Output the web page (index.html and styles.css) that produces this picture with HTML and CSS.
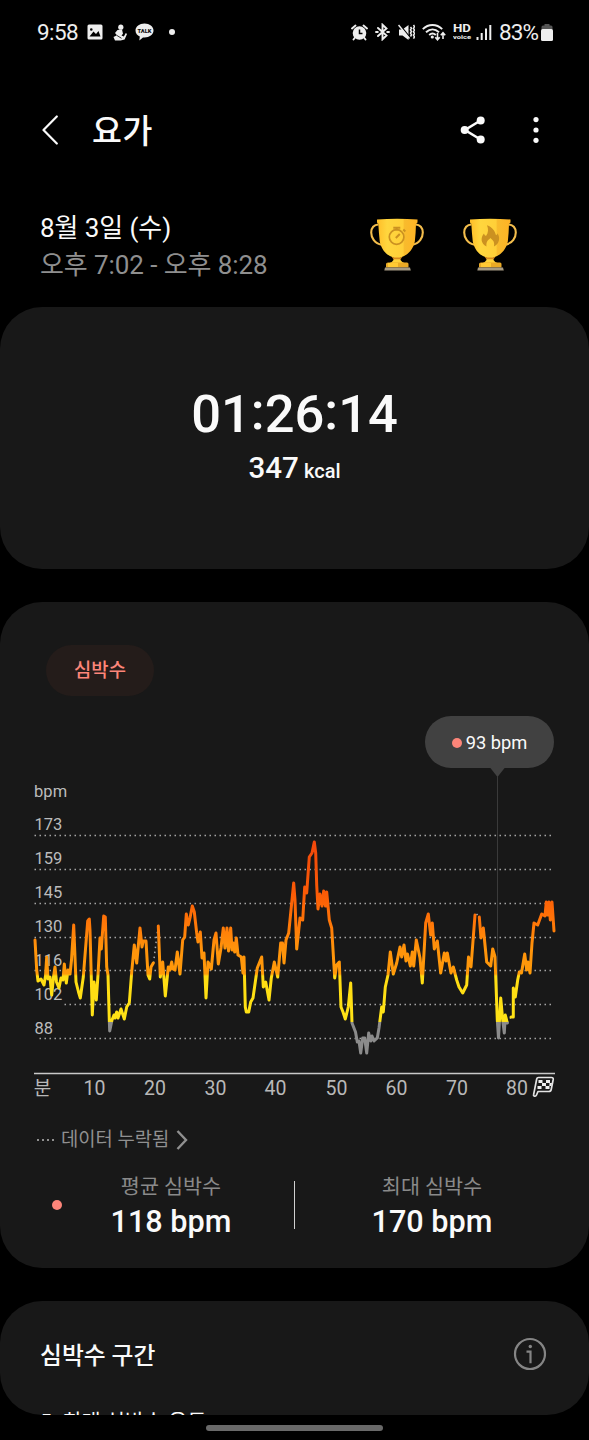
FILE: index.html
```html
<!DOCTYPE html>
<html lang="ko">
<head>
<meta charset="utf-8">
<title>요가</title>
<link rel="stylesheet" href="styles.css">
</head>
<body>
<div class="screen">
  <header class="status">
    <span class="clock">9:58</span>
    <svg class="st-photo" width="16" height="16" viewBox="0 0 16 16"><path fill="#eee" fill-rule="evenodd" d="M2 .5h12a1.500 1.500 0 0 1 1.500 1.500v12a1.500 1.500 0 0 1-1.500 1.500H2A1.500 1.500 0 0 1 .5 14V2A1.500 1.500 0 0 1 2 .5zM2.500 12.500h11L11.500 7 9 10 6.500 7.500zM3 5.500a1.300 1.300 0 1 0 2.600 0a1.300 1.300 0 1 0-2.600 0z"/></svg>
    <svg class="st-person" width="15" height="17" viewBox="0 0 15 17"><g fill="#eee"><circle cx="7.800" cy="3.200" r="2.600"/><path d="M4.500 6l4.500-.5 1 4.300-1.500 1.700 2.300 1 2-3.500 1.200 1-2.400 5.500-4 1H2L.5 13l3.500-1.800L2 9z"/></g><path d="M4 11.500l4.500 2.800" stroke="#000" stroke-width=".8"/></svg>
    <svg class="st-talk" width="19" height="18" viewBox="0 0 19 18"><path fill="#eee" d="M9.500.5c5 0 9 3 9 7s-4 7-9 7l-1.500-.1-3.700 3 .5-3.800C2.300 12.500.5 10.300.5 7.500c0-4 4-7 9-7z"/><text x="2.500" y="10" textLength="14" lengthAdjust="spacingAndGlyphs" class="tiny dark">TALK</text></svg>
    <i class="st-dot"></i>
    <span class="grow"></span>
    <svg class="st-alarm" width="17" height="17" viewBox="0 0 17 17"><circle cx="8.500" cy="9" r="5.300" fill="none" stroke="#eee" stroke-width="3"/><circle cx="8.500" cy="9" r="5" fill="#eee"/><path d="M1 4.500L4.500 1.500M16 4.500L12.500 1.500M4 13.500l-1.500 2M13 13.500l1.500 2" stroke="#eee" stroke-width="1.900" stroke-linecap="round"/><path d="M8.500 5.500v4H11.500" fill="none" stroke="#000" stroke-width="1.500"/></svg>
    <svg class="st-bt" width="15" height="18" viewBox="0 0 15 18"><path d="M3 5l8.500 7.500-4 3.800V1.700l4 3.800L3 13M1 9h1.800M12.200 9H14" fill="none" stroke="#eee" stroke-width="1.900" stroke-linecap="round"/></svg>
    <svg class="st-mute" width="17" height="17" viewBox="0 0 17 17"><path d="M1 5.500h3.500L10.500 1v15l-6-4.500H1z" fill="#eee"/><path d="M1.500 .5l11 13.500" stroke="#000" stroke-width="1.300"/><path d="M.5 1l11 13.500" stroke="#eee" stroke-width="1.500"/><path d="M12.500 3l1 1.300-1 1.500 1 1.700-1 1.600 1 1.700-1 1.700M15.500 1l1 1.700-1 1.700 1 1.700-1 1.700 1 1.700-1 1.700 1 1.700-1 1.700" fill="none" stroke="#eee" stroke-width="1.500"/></svg>
    <svg class="st-wifi" width="24" height="18" viewBox="0 0 24 18"><g fill="none" stroke="#eee" stroke-width="1.900"><path d="M.8 6.200c5.600-5.600 13.800-5.600 19.400 0M4 9.200c4-3.700 9-3.700 13 0M7.200 12c2-1.800 4.600-1.800 6.600 0"/></g><circle cx="10.300" cy="14" r="1.600" fill="#eee"/><path d="M15.500 10v6.500M13.300 14.300l2.200 2.500 2.200-2.500M21 16v-6M18.800 12.300L21 9.800l2.200 2.500" fill="none" stroke="#eee" stroke-width="1.600"/></svg>
    <svg class="st-hd" width="19" height="20" viewBox="0 0 19 20"><text x="0" y="10" class="hd" textLength="18" lengthAdjust="spacingAndGlyphs">HD</text><text x="0" y="17" class="voice" textLength="18" lengthAdjust="spacingAndGlyphs">voice</text></svg>
    <svg class="st-signal" width="16" height="17" viewBox="0 0 16 17"><path d="M1.500 16v-3M5.700 16V9M10 16V4.500M14.300 16V1" stroke="#eee" stroke-width="2"/></svg>
    <span class="percent">83%</span>
    <svg class="st-batt" width="12" height="17" viewBox="0 0 12 17"><path d="M3.500 0h5v1.500h1.500q1.500 0 1.500 1.500v2.500H.5V3q0-1.500 1.500-1.500h1.500z" fill="#555"/><rect x="0" y="5" width="12" height="12" rx="1.500" fill="#eee"/></svg>
  </header>

  <nav class="appbar">
    <svg class="back" width="18" height="30" viewBox="0 0 18 30"><path d="M15.800 1.500L2.500 15l13.300 13.500" fill="none" stroke="#fafafa" stroke-width="2.200" stroke-linecap="round" stroke-linejoin="round"/></svg>
    <h1>요가</h1>
    <svg class="share" width="26" height="28" viewBox="0 0 26 28"><path d="M20.500 4.500L5 14l15.500 9.500" fill="none" stroke="#fafafa" stroke-width="2.600"/><g fill="#fafafa"><circle cx="20.700" cy="4.500" r="4"/><circle cx="4.700" cy="14" r="4"/><circle cx="20.700" cy="23.500" r="4"/></g></svg>
    <svg class="more" width="6" height="28" viewBox="0 0 6 28"><g fill="#fafafa"><circle cx="3" cy="3.600" r="2.600"/><circle cx="3" cy="14" r="2.600"/><circle cx="3" cy="24.300" r="2.600"/></g></svg>
  </nav>

  <section class="when">
    <div class="when-text">
      <p class="date">8월 3일 (수)</p>
      <p class="range">오후 7:02 - 오후 8:28</p>
    </div>
    <svg class="trophy" width="54" height="53" viewBox="0 0 54 53">
      <defs>
        <linearGradient id="cup"><stop offset="0" stop-color="#ffbd28"/><stop offset=".25" stop-color="#ffd63e"/><stop offset=".64" stop-color="#ffcf38"/><stop offset=".68" stop-color="#f8bb2d"/><stop offset="1" stop-color="#ffb324"/></linearGradient>
        <g id="trophy">
          <path d="M8.500 6.500C4 6.500 1.200 10 1.200 14.500s3 11 10.500 12.200M45.500 6.500c4.500 0 7.300 3.500 7.300 8s-3 11-10.500 12.200" fill="none" stroke="#f3bd4c" stroke-width="2.100"/>
          <path d="M7 1.500Q27 .2 47.500 1.500V4q0 1.500-1.500 1.800-.2 9-1.200 18C42.500 33 37 37.500 30.500 39.500V42q1 2 5 3.500H18.500q4-1.500 5-3.500v-2.500C17 37.500 12 33 9.800 23.800q-1-9-1.500-18Q7 5.500 7 4z" fill="url(#cup)"/>
          <path d="M21.500 38.700q5.500 1.800 11 0l-2 2.500h-7z" fill="#d8891d"/>
          <path d="M16 46q0-1.500 2-1.500h19q1.500 0 1.500 1.500v3.500H16z" fill="#e9a925"/><path d="M18 45h10v4H18z" fill="#ffc933"/>
          <path d="M15 49.500h25l.8 3H14.300z" fill="#a59a83"/>
        </g>
      </defs>
      <use href="#trophy"/>
      <g fill="none" stroke="#cb9121"><circle cx="26.600" cy="19" r="7.300" stroke-width="1.700"/><path d="M23.300 9.800h7M26.600 10v2.500M33.300 11.500l2 2M25.800 20l4-4" stroke-width="2"/></g>
    </svg>
    <svg class="trophy" width="54" height="53" viewBox="0 0 54 53"><use href="#trophy"/><path d="M23.500 28.500c-6-3-6-9-2.500-13 .5 1.500 1 2 2 2.500 2.500-3.500 2.500-7 1-10.800 5.500 2 8 6 9 10 1-.5 1.500-1 1.500-2 3 4.500 2 10.500-3.500 13.300.8-5-1-6-3.500-8.500-3 2.500-4.500 4-4 8.500z" fill="#cb9121"/></svg>
  </section>

  <section class="card total">
    <p class="duration">01<span>:</span>26<span>:</span>14</p>
    <p class="energy">347 <small>kcal</small></p>
  </section>

  <section class="card heart">
    <span class="chip">심박수</span>
    <div class="bubble"><i></i>93 bpm</div>
    <svg class="chart" width="589" height="336" viewBox="0 768 589 336">
      <defs>
        <linearGradient id="zones" gradientUnits="userSpaceOnUse" x1="0" y1="840" x2="0" y2="1056">
          <stop offset="0" stop-color="#f2470b"/><stop offset=".25" stop-color="#fb5b06"/><stop offset=".4" stop-color="#ff7a08"/><stop offset=".5" stop-color="#ff930b"/><stop offset=".62" stop-color="#ff9a0a"/><stop offset=".63" stop-color="#ffdc12"/><stop offset=".84" stop-color="#ffe316"/><stop offset=".845" stop-color="#8b8b8b"/><stop offset="1" stop-color="#8b8b8b"/>
        </linearGradient>
      </defs>
      <path d="M490 767.500h15l-7.500 9.500z" fill="#414141"/>
      <path d="M497.500 776V1020" stroke="#3a3a3a"/>
      <g class="grid"><path d="M34.500 835.500H554M34.500 869.500H554M34.500 903.500H554M34.500 937.500H554M34.500 970.500H554M64.500 1004.500H554M39.500 1038.500H554"/></g>
      <g class="ylabels">
        <text x="34" y="797" class="unit">bpm</text>
        <text x="34.500" y="830">173</text><text x="34.500" y="864">159</text><text x="34.500" y="898">145</text><text x="34.500" y="932">130</text><text x="34.500" y="966">116</text><text x="34.500" y="1000">102</text><text x="34.500" y="1034">88</text>
      </g>
      <path class="missing" d="M153.500 963L158 927M476.500 914l3 3M507.500 1023l3.500-6"/>
      <path class="pulse" d="M35 940L36.700 970 38 981 41 979 44 985 45.500 976 46.700 957 48 979 50 977 51.700 995 53.500 977 55 967 56.500 982 59 988 61 978 63 980 64.300 964 66.300 983 68 970 70 974 71.500 960 73.700 925 76 982 78.500 992 80.300 998 83.300 977 87.700 921 89.300 919 90 930 92.300 1015 94 982 96.300 1000 98 975 100 938 101.300 949 103.700 916 105.300 917 106.700 967 108 975 109.300 1020 109.700 1031 112 1020 114 1015 115 1018 116.700 1012 118 1018 121 1009 124.300 1019 126.700 1007 129.300 1003 131.700 972 134.300 945 136.700 963 140 928 142 947 143.300 941 146 941 148 975 149.700 979 151 967 153.300 963"/>
      <path class="pulse" d="M158.300 926L160.300 977 162.700 962 165.300 996 168.300 967 170 970 171.700 962 173 969 175 970 177.300 952 180 974 182.700 940 184.700 937 186.300 914 188.300 925 190 918 192.300 906 194.300 912 196.700 933 198 942 200.300 932 202 958 204 953 206 998 208 962 211.300 969 214 940 216 933 218.300 964 221 948 223.300 928 225 948 227 928 228.500 951 230.700 928 232 950 233.300 943 234.700 952 236.300 938 238 955 241.300 957 243 973 244 957 245.300 1007 246.300 1012 248.700 1012 250.700 1002 253 998 256 977 257.300 968 261.700 957 263.300 987 265.700 982 269 1000 271.300 978 274.300 962 277.700 977 280.700 943 282.500 943 284 963 286 940 288.700 933 291 910 293.700 883 295 900 296.700 949 300 918 302.700 920 304.700 887 306.700 893 309.300 857 312 853 314.300 842 315.700 853 316.700 885 318 909 320 894 322 906 323.700 891 325.500 906 326.700 892 329.300 920 331.700 928 334.700 978 336.700 965 339.300 962 341 1007 343 1012 345.300 1019 348.300 1007 350.700 983 352 1023 355.500 1032 357.300 1042 359 1041 360.700 1053 362.700 1038 364.700 1038 366.700 1053 368.700 1033 370.700 1041 372 1036 374 1041 377.300 1038 379 1028 381.700 1007 383.300 1012 385.300 987 388 975 390.300 952 393.300 974 396.700 963 400 947 401.700 957 404 945 406 961 407.500 954 410.300 966 412.300 952 413.700 966 416.300 940 420 958 422.300 983 424 953 425.700 923 428.300 914 430.700 935 432.300 923 434.300 949 437.300 941 440.700 973 444.300 953 446 961 447.300 953 451 973 453.300 967 456.700 980 459 987 462.700 993 466.700 985 468.500 957 471 967 475 915"/>
      <path class="pulse" d="M479.300 917L481 938 483.300 928 486.700 962 490.700 966 492.700 949 495 957 497.300 1020 498.500 1038 500.700 998 502.700 1020 504.300 1033 505.300 1015 507.300 1023"/>
      <path class="pulse" d="M511 1017H513.300V988L515.300 997 517.700 980 519.300 972 521.500 973 524.700 954 526.700 970 528 962 530 973 532 943 534 923 537.700 925 541.700 914 545 916 546.300 902 547.700 915 549 902 550.300 920 552 902 554 931"/>
      <path d="M34 1073.500H555" stroke="#c9c9c9" stroke-width="1.500"/>
      <g class="xlabels">
        <text x="42.500" y="1094.500" class="ko">분</text><text x="94.500" y="1095">10</text><text x="155" y="1095">20</text><text x="215.500" y="1095">30</text><text x="275.500" y="1095">40</text><text x="336.500" y="1095">50</text><text x="396.500" y="1095">60</text><text x="457" y="1095">70</text><text x="517" y="1095">80</text>
      </g>
      <g><path d="M538.500 1077.500h13q2 0 1.700 2l-2 10q-.4 2-2.400 2H538l-1.500 3.500q-.6 1.500-2 1.200t-.8-2l3-15.200q.3-1.500 1.800-1.500z" fill="#1a1a1a" stroke="#e4e4e4" stroke-width="1.700" stroke-linejoin="round"/><path d="M538.500 1080h4v3h-4zM546 1080h4v3h-4zM542 1083h4v3h-4zM537.500 1086h4v3h-4zM545.500 1086h4v3h-4zM549.500 1083h2.500l-.7 3h-2z" fill="#eee"/></g>
    </svg>
    <p class="notice"><i class="dots"></i>데이터 누락됨<svg width="12" height="20" viewBox="0 0 12 20"><path d="M1.500 1l8.500 9-8.500 9" fill="none" stroke="#909090" stroke-width="2.400"/></svg></p>
    <div class="stats">
      <i class="marker"></i>
      <dl><dt>평균 심박수</dt><dd>118 bpm</dd></dl>
      <hr>
      <dl><dt>최대 심박수</dt><dd>170 bpm</dd></dl>
    </div>
  </section>

  <section class="card ranges">
    <div class="ranges-head"><h2>심박수 구간</h2>
      <svg width="34" height="34" viewBox="0 0 34 34"><circle cx="17" cy="17" r="15" fill="none" stroke="#858585" stroke-width="2.200"/><path d="M13.500 14.700h4v11.500" fill="none" stroke="#858585" stroke-width="2.200"/><circle cx="17.300" cy="9.500" r="1.700" fill="#858585"/></svg>
    </div>
    <p class="zone">5. 최대 심박수 운동</p>
  </section>
  <div class="handle"></div>
</div>
</body>
</html>
```
FILE: styles.css
```css
* { box-sizing: border-box; }
body, p, h1, h2, dl, dd, hr { margin: 0; }
body { background: #000; color: #fafafa; font-family: Roboto, "Noto Sans CJK KR", sans-serif; }
svg { display: block; flex: none; }
.screen { width: 589px; height: 1440px; overflow: hidden; display: flex; flex-direction: column; }

.status { height: 64px; padding: 0 36px 0 37px; display: flex; align-items: center; color: #eee; font-size: 22.5px; flex: none; }
.clock { width: 41px; letter-spacing: -.6px; white-space: nowrap; }
.st-photo { margin-left: 9px; }
.st-person { margin-left: 10px; }
.st-talk { margin-left: 7px; }
.st-dot { width: 6px; height: 6px; border-radius: 50%; background: #eee; margin-left: 15px; }
.grow { flex: 1; }
.st-bt { margin-left: 7px; }
.st-mute { margin-left: 8px; }
.st-wifi { margin-left: 7px; }
.st-hd { margin-left: 7px; }
.st-signal { margin-left: 4px; }
.percent { margin-left: 7px; width: 42px; letter-spacing: -.9px; white-space: nowrap; }
.tiny { font: 900 6px Roboto, sans-serif; }
.dark { fill: #111; }
.hd { font: 700 11px Roboto, sans-serif; fill: #eee; }
.voice { font: 700 6px Roboto, sans-serif; fill: #eee; }

.appbar { height: 132px; padding: 0 50px 0 41px; display: flex; align-items: center; flex: none; }
h1 { margin-left: 33px; padding-top: 4px; font-size: 32.5px; line-height: 40px; font-weight: 500; flex: 1; letter-spacing: .5px; }
.more { margin-left: 47px; }

.when { height: 111px; padding: 13px 72px 0 40px; display: flex; flex: none; }
.when-text { flex: 1; }
.date, .range { font-size: 26px; line-height: 37px; white-space: nowrap; letter-spacing: -.08px; padding-top: 1px; margin-bottom: -1px; }
.range { color: #8f8f8f; }
.trophy { margin-top: 9px; }
.trophy + .trophy { margin-left: 39px; }

.card { background: #181818; border-radius: 42px; flex: none; }
.total { height: 262px; padding-top: 77px; text-align: center; }
.duration { font-size: 52.5px; line-height: 60px; font-weight: 500; }
.duration span { display: inline-block; transform: translateY(-3px); }
.energy { font-size: 29.5px; line-height: 34px; font-weight: 500; margin-top: 7px; }
.energy small { font-size: 20px; margin-left: -2px; }

.heart { height: 666px; margin-top: 33px; padding-top: 43px; display: flex; flex-direction: column; }
.chip { margin-left: 46px; width: 108px; height: 51px; border-radius: 26px; background: #241c1a; color: #fc8579; font-size: 18.8px; line-height: 53px; text-align: center; font-weight: 500; }
.bubble { align-self: flex-end; margin: 20px 35px 0 0; width: 129px; height: 52px; border-radius: 26px; background: #414141; display: flex; align-items: center; justify-content: center; font-size: 18.3px; padding-top: 1px; gap: 4px; }
.bubble i, .marker { width: 10px; height: 10px; border-radius: 50%; background: #fc8579; }
.grid path { stroke: #a5a5a5; stroke-width: 1.300; stroke-dasharray: 1.500 3.500; }
.pulse { fill: none; stroke: url(#zones); stroke-width: 3; stroke-linejoin: round; stroke-linecap: round; }
.missing { fill: none; stroke: #aaa; stroke-width: 1.500; stroke-dasharray: 1.500 3.500; }
.ylabels { font-size: 16.500px; fill: #bcbcbc; }
.unit { letter-spacing: .1px; }
.xlabels { font-size: 19.500px; fill: #b8b8b8; text-anchor: middle; }
.ko { font-size: 19px; }

.notice { height: 28px; margin: 22px 0 0 37px; display: flex; align-items: center; font-size: 18.8px; color: #909090; line-height: 28px; }
.dots { width: 18px; height: 2px; margin-right: 6px; background: repeating-linear-gradient(90deg, #909090 0 2px, transparent 2px 5px); }
.notice svg { margin-left: 7px; }
.stats { display: flex; align-items: center; padding: 0 0 0 52px; height: 78px; margin-top: 12px; }
.stats dl { text-align: center; width: 218px; padding-top: 3px; }
.marker { flex: none; }
dt { font-size: 20.7px; line-height: 30px; color: #8a8a8a; }
dd { font-size: 30.6px; line-height: 40px; font-weight: 500; }
hr { width: 1px; height: 48px; border: 0; background: #d0d0d0; }
.stats hr { margin-left: 14px; }
.stats hr + dl { margin-left: 28px; }

.ranges { height: 114px; margin-top: 33px; padding: 36px 42px 0 40px; overflow: hidden; border-radius: 42px; }
.ranges-head { display: flex; justify-content: space-between; align-items: center; height: 34px; }
h2 { font-size: 23.8px; line-height: 34px; font-weight: 500; padding-top: 3px; }
.zone { font-size: 20.8px; line-height: 30px; margin-top: 36px; white-space: nowrap; }
.handle { width: 177px; height: 6px; border-radius: 3px; background: #696969; margin: 10px 0 0 206px; flex: none; }
```
